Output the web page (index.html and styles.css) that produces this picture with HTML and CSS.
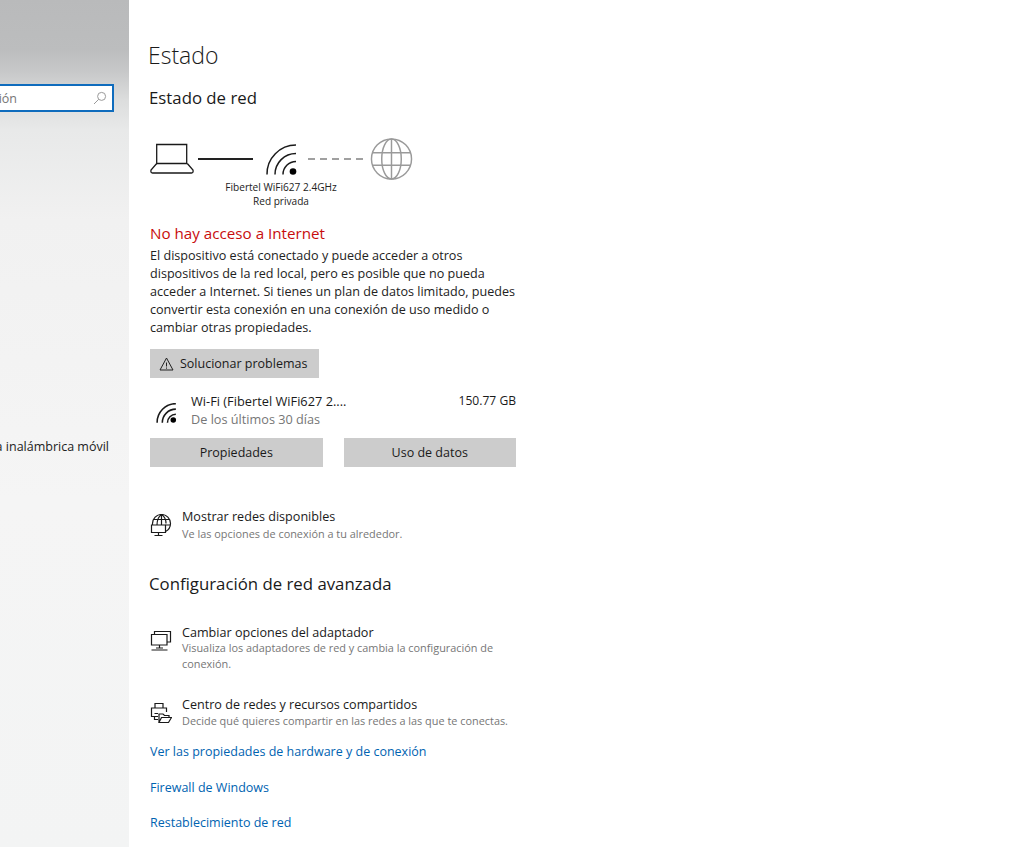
FILE: index.html
```html
<!DOCTYPE html>
<html lang="es">
<head>
    <meta charset="UTF-8">
    <title>Estado</title>
    <link rel="stylesheet" href="styles.css">
</head>
<body>
    <aside class="sidebar">
        <div class="sidebar-inner">
            <div class="search">
                <span class="search-text">Buscar una configuración</span>
                <svg class="search-icon" width="14" height="14" viewBox="0 0 14 14" fill="none" stroke="#9a9a9a" stroke-width="1">
                    <circle cx="8.600" cy="5.400" r="4"/>
                    <path d="M5.700 8.300 1 13"/>
                </svg>
            </div>
            <div class="side-item">Zona con cobertura inalámbrica móvil</div>
        </div>
    </aside>

    <main class="content">
        <h1>Estado</h1>
        <h2 class="first-heading">Estado de red</h2>

        <div class="diagram">
            <div class="diagram-row">
                <svg class="laptop" width="44" height="32" viewBox="0 0 44 32" fill="none" stroke="#1a1a1a" stroke-width="1.300">
                    <path d="M6.700 2.500h30v19h-30z"/>
                    <path d="M6.700 21.500 1 28q-.6 3 1.500 3h39q2.100 0 1.500-3l-5.700-6.500"/>
                </svg>
                <span class="line-solid"></span>
                <svg class="wifi-big" width="31" height="31" viewBox="0 0 31 31" fill="none" stroke="#1a1a1a" stroke-width="1.500">
                    <path d="M1 30.500A29 29 0 0 1 30 1"/>
                    <path d="M9 30.500A21 21 0 0 1 30 9.500"/>
                    <path d="M17 30.500A13 13 0 0 1 30 17.500"/>
                    <circle cx="27" cy="27.500" r="3.300" fill="#000" stroke="none"/>
                </svg>
                <span class="line-dashed"></span>
                <svg width="43" height="44" viewBox="0 0 44 44" fill="none" stroke="#9a9a9a" stroke-width="1.500">
                    <circle cx="22" cy="22" r="20.500"/>
                    <ellipse cx="22" cy="22" rx="10" ry="20.500"/>
                    <path d="M22 1.500v41M2.500 15.500h39M2.500 28.500h39"/>
                </svg>
            </div>
            <div class="diagram-label">Fibertel WiFi627 2.4GHz<br>Red privada</div>
        </div>

        <p class="alert">No hay acceso a Internet</p>
        <p class="message">El dispositivo está conectado y puede acceder a otros dispositivos de la red local, pero es posible que no pueda acceder a Internet. Si tienes un plan de datos limitado, puedes convertir esta conexión en una conexión de uso medido o cambiar otras propiedades.</p>

        <button class="btn btn-trouble">
            <svg width="15" height="14" viewBox="0 0 15 14" fill="none" stroke="#222" stroke-width="1">
                <path d="M7.500 1 14 13H1z"/>
                <path d="M7.500 5.500v4M7.500 10.500v1.200"/>
            </svg>
            Solucionar problemas
        </button>

        <div class="usage">
            <svg width="21" height="20" viewBox="0 0 31 31" fill="none" stroke="#1a1a1a" stroke-width="2.400">
                <path d="M1 30.500A29 29 0 0 1 30 1"/>
                <path d="M9 30.500A21 21 0 0 1 30 9.500"/>
                <path d="M17 30.500A13 13 0 0 1 30 17.500"/>
                <circle cx="26" cy="26.500" r="4.300" fill="#000" stroke="none"/>
            </svg>
            <div class="usage-text">
                <div class="usage-name">Wi-Fi (Fibertel WiFi627 2....</div>
                <div class="usage-sub">De los últimos 30 días</div>
            </div>
            <div class="usage-amount">150.77 GB</div>
        </div>

        <div class="btn-row">
            <button class="btn">Propiedades</button>
            <button class="btn">Uso de datos</button>
        </div>

        <div class="option option-first">
            <svg width="22" height="22" viewBox="0 0 22 22" fill="none" stroke="#1a1a1a" stroke-width="1.200">
                <path d="M2.500 11V9.500A9 9 0 0 1 20.500 9.500A9 9 0 0 1 15.500 17.500"/>
                <path d="M11.500 .5c-3 2-4.500 5-4.500 10.500M11.500 .5c3 2 4.500 5 4.500 9M11.500 .5v10.500M3.500 5.500h16M15.500 11h4.500"/>
                <path d="M1.500 11h14v7.500h-14zM8.500 18.500v3M4.500 21.500h8"/>
            </svg>
            <div class="option-text">
                <div class="option-title">Mostrar redes disponibles</div>
                <div class="option-sub">Ve las opciones de conexión a tu alrededor.</div>
            </div>
        </div>

        <h2 class="advanced-heading">Configuración de red avanzada</h2>

        <div class="option option-adapter">
            <svg width="22" height="22" viewBox="0 0 22 22" fill="none" stroke="#1a1a1a" stroke-width="1.200">
                <path d="M4.500 4V1.500h16V12H17"/>
                <path d="M1.500 4.500H17V15H1.500zM9.500 15v3M1.500 20h16M6 18h7"/>
            </svg>
            <div class="option-text">
                <div class="option-title">Cambiar opciones del adaptador</div>
                <div class="option-sub option-sub-adapter">Visualiza los adaptadores de red y cambia la configuración de conexión.</div>
            </div>
        </div>

        <div class="option option-center">
            <svg width="22" height="22" viewBox="0 0 22 22" fill="none" stroke="#1a1a1a" stroke-width="1.200">
                <path d="M5 6V1.500h8V6M8 14.500H1.500V6h15v4"/>
                <path d="M4.500 11.500H8M4.500 14.500v3H8"/>
                <path d="M9 20.500v-8.500h4l1.500 1.500h4.500v2M9 20.500h9.500l3-5H11.500z"/>
            </svg>
            <div class="option-text">
                <div class="option-title">Centro de redes y recursos compartidos</div>
                <div class="option-sub option-sub-center">Decide qué quieres compartir en las redes a las que te conectas.</div>
            </div>
        </div>

        <a class="link">Ver las propiedades de hardware y de conexión</a>
        <a class="link">Firewall de Windows</a>
        <a class="link">Restablecimiento de red</a>
    </main>
</body>
</html>
```

FILE: styles.css
```css
html, body {
    margin: 0;
    height: 847px;
    overflow: hidden;
}

body {
    display: flex;
    font-family: 'Open Sans', 'Noto Sans', sans-serif;
    color: #1a1a1a;
    background-color: #ffffff;
}

.sidebar {
    width: 129px;
    height: 847px;
    flex-shrink: 0;
    overflow: hidden;
    background: linear-gradient(180deg, #b9babb 0, #bcbdbe 50px, #c6c7c8 70px, #dcdddd 100px, #e8e9e9 130px, #f1f1f1 220px, #f5f5f5 500px, #f3f4f4 847px);
}

.sidebar-inner {
    width: 300px;
    margin-left: -186px;
    padding-top: 84px;
}

.search {
    display: flex;
    align-items: center;
    justify-content: flex-end;
    gap: 76px;
    box-sizing: border-box;
    height: 28px;
    width: 300px;
    padding-right: 5px;
    background-color: #ffffff;
    border: 2px solid #0f6cbd;
    font-size: 12.500px;
    white-space: nowrap;
    color: #767676;
}

.side-item {
    margin-top: 326px;
    font-size: 12.500px;
    line-height: 18px;
    white-space: nowrap;
    text-align: right;
    padding-right: 5px;
    color: #222222;
}

.content {
    width: 366px;
    padding-left: 20px;
}

h1 {
    margin: 0 0 0 -1px;
    padding-top: 39px;
    font-size: 23px;
    line-height: 32px;
    font-weight: 300;
}

h2 {
    margin: 0;
    font-weight: 400;
    font-size: 16.800px;
    line-height: 24px;
}

.first-heading {
    margin-top: 15px;
}

.diagram {
    margin-top: 27px;
}

.diagram-row {
    display: flex;
    align-items: center;
    height: 44px;
    margin-left: 1px;
}

.laptop {
    margin-top: -3px;
}

.line-solid {
    width: 55px;
    height: 2px;
    margin: 0 13px 0 4px;
    background-color: #222222;
}

.line-dashed {
    width: 57px;
    height: 2px;
    margin: 0 5px 0 11px;
    background: repeating-linear-gradient(90deg, #a0a0a0 0, #a0a0a0 7px, transparent 7px, transparent 12px);
}

.diagram-label {
    width: 264px;
    margin-top: -1px;
    font-size: 10.100px;
    line-height: 14px;
    text-align: center;
    color: #222222;
}

.alert {
    margin: 14px 0 0 1px;
    font-size: 15.200px;
    line-height: 22px;
    color: #c80d0d;
}

.message {
    margin: 3px 0 0 1px;
    width: 370px;
    font-size: 12.600px;
    line-height: 18px;
    color: #222222;
}

.btn {
    height: 29px;
    border: 0;
    padding: 0;
    font-family: inherit;
    font-size: 12.500px;
    color: #1a1a1a;
    background-color: #cccccc;
}

.btn-trouble {
    display: flex;
    align-items: center;
    gap: 6px;
    width: 169px;
    margin: 12px 0 0 1px;
    padding-left: 9px;
}

.usage {
    display: flex;
    align-items: flex-start;
    width: 360px;
    margin: 14px 0 0 7px;
}

.usage svg {
    margin-top: 11px;
}

.usage-text {
    margin-left: 14px;
    flex: 1;
    font-size: 12.700px;
    line-height: 18px;
}

.usage-name {
    font-size: 12.800px;
}

.usage-sub {
    color: #767676;
}

.usage-amount {
    font-size: 12.100px;
    line-height: 18px;
}

.btn-row {
    display: flex;
    gap: 21px;
    margin: 10px 0 0 1px;
}

.btn-row .btn {
    width: 172.500px;
    flex-shrink: 0;
}

.option {
    display: flex;
    align-items: flex-start;
    gap: 10px;
    margin-left: 1px;
    width: 366px;
}

.option svg {
    margin-top: 6px;
    flex-shrink: 0;
}

.option-title {
    font-size: 12.600px;
    line-height: 18px;
}

.option-sub {
    font-size: 10.900px;
    line-height: 16px;
    color: #767676;
}

.option-sub-adapter {
    margin-top: -2px;
}

.option-sub-center {
    margin-top: -1px;
}

.option-first {
    margin-top: 41px;
}

.advanced-heading {
    margin-top: 30px;
}

.option-adapter {
    margin-top: 28px;
}

.option-center {
    margin-top: 24px;
}

.link {
    display: block;
    margin: 14px 0 0 1px;
    font-size: 12.500px;
    line-height: 18px;
    color: #0063b1;
}

.link + .link {
    margin-top: 17.500px;
}
```
